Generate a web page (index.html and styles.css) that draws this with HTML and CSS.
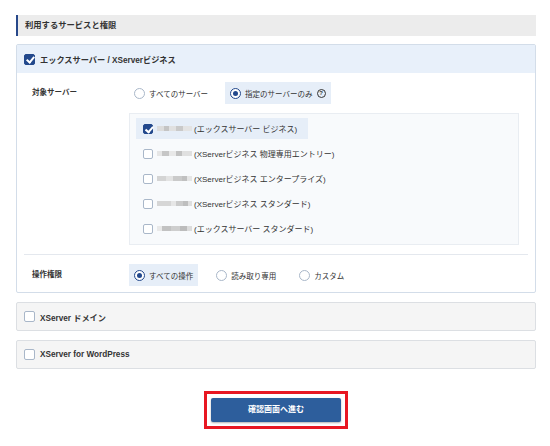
FILE: index.html
```html
<!doctype html>
<html lang="ja">
<head>
	<meta charset="UTF-8">
	<title>利用するサービスと権限</title>
	<link rel="stylesheet" href="styles.css">
</head>
<body>
	<div class="wrap">
		<h2 class="sec_title">利用するサービスと権限</h2>

		<!-- エックスサーバー / XServerビジネス -->
		<div class="panel panel_on">
			<div class="panel_head">
				<span class="chk chk_on"></span>
				<span class="panel_name">エックスサーバー / XServerビジネス</span>
			</div>
			<div class="panel_body">
				<div class="row">
					<div class="row_label">対象サーバー</div>
					<div class="row_main">
						<div class="opts">
							<label class="opt"><span class="radio"></span>すべてのサーバー</label>
							<label class="opt opt_on"><span class="radio radio_on"></span>指定のサーバーのみ<span class="help">?</span></label>
						</div>
						<ul class="server_list">
							<li class="server server_on"><span class="chk chk_sm chk_on"></span><span class="mask m1"></span>(エックスサーバー ビジネス)</li>
							<li class="server"><span class="chk chk_sm"></span><span class="mask m2"></span>(XServerビジネス 物理専用エントリー)</li>
							<li class="server"><span class="chk chk_sm"></span><span class="mask m3"></span>(XServerビジネス エンタープライズ)</li>
							<li class="server"><span class="chk chk_sm"></span><span class="mask m4"></span>(XServerビジネス スタンダード)</li>
							<li class="server"><span class="chk chk_sm"></span><span class="mask m5"></span>(エックスサーバー スタンダード)</li>
						</ul>
					</div>
				</div>
				<div class="row row_line">
					<div class="row_label">操作権限</div>
					<div class="row_main">
						<div class="opts opts_wide">
							<label class="opt opt_on"><span class="radio radio_on"></span>すべての操作</label>
							<label class="opt"><span class="radio"></span>読み取り専用</label>
							<label class="opt"><span class="radio"></span>カスタム</label>
						</div>
					</div>
				</div>
			</div>
		</div>

		<div class="panel panel_off">
			<div class="panel_head">
				<span class="chk"></span>
				<span class="panel_name">XServer ドメイン</span>
			</div>
		</div>

		<div class="panel panel_off">
			<div class="panel_head">
				<span class="chk"></span>
				<span class="panel_name">XServer for WordPress</span>
			</div>
		</div>

		<div class="btn_area">
			<div class="mark">
				<a class="btn" href="#">確認画面へ進む</a>
			</div>
		</div>
	</div>
</body>
</html>
```

FILE: styles.css
```css
*{
	margin: 0;
	padding: 0;
	list-style-type: none;
	box-sizing: border-box;
}
body{
	background: #fff;
	color: #333;
	font-family: "Liberation Sans", "Noto Sans CJK JP", sans-serif;
	font-size: 8px;
}
.wrap{
	width: 520px;
	margin-left: 16px;
	padding-top: 15px;
}
.sec_title{
	height: 21px;
	line-height: 21px;
	padding-left: 7px;
	background: #ececec;
	border-left: 2px solid #27488a;
	font-size: 8.3px;
	font-weight: bold;
}

/* パネル */
.panel{
	margin-top: 8px;
	border: 1px solid #d3dde9;
	border-radius: 2px;
	background: #fff;
}
.panel_off{
	margin-top: 9px;
	background: #f5f5f5;
	border-color: #dcdfe3;
}
.panel_head{
	height: 28px;
	display: flex;
	align-items: center;
	gap: 5px;
	padding-left: 7px;
}
.panel_off .panel_head{
	height: 27px;
}
.panel_on .panel_head{
	background: #e8f0fa;
}
.panel_name{
	font-weight: bold;
	font-size: 8.2px;
}
.panel_body{
	padding: 9px 7px 6px 7px;
}

/* チェックボックス */
.chk{
	display: inline-block;
	width: 11px;
	height: 11px;
	border: 1px solid #a9b7c9;
	border-radius: 2px;
	background: #fff;
	flex-shrink: 0;
	position: relative;
}
.chk_sm{
	width: 10px;
	height: 10px;
}
.chk_on{
	background: #22488c;
	border-color: #22488c;
}
.chk_on:after{
	content: "";
	position: absolute;
	left: 3px;
	top: 0px;
	width: 3px;
	height: 6px;
	border: solid #fff;
	border-width: 0 2px 2px 0;
	transform: rotate(40deg);
}
.chk_sm.chk_on:after{
	left: 2.5px;
	top: 0;
	height: 5.5px;
}

/* 行 */
.row{
	display: flex;
}
.row_line{
	margin-top: 9px;
	padding-top: 9px;
	border-top: 1px solid #e4e8ee;
}
.row_label{
	width: 105px;
	padding-left: 8px;
	height: 22px;
	line-height: 22px;
	font-size: 7.5px;
	font-weight: bold;
	flex-shrink: 0;
}
.row_main{
	flex: 1;
	padding-right: 9px;
}
.opts{
	display: flex;
	gap: 12px;
	font-size: 7.5px;
}
.opts_wide{
	gap: 13px;
}
.opt{
	height: 22px;
	display: flex;
	align-items: center;
	gap: 3px;
	padding: 0 5px;
}
.opt_on{
	background: #e6eef8;
}
.radio{
	display: inline-block;
	width: 11px;
	height: 11px;
	border: 1px solid #a9b7c9;
	border-radius: 50%;
	background: #fff;
	margin-right: 1px;
	position: relative;
}
.radio_on{
	border-color: #22488c;
}
.radio_on:after{
	content: "";
	position: absolute;
	left: 2px;
	top: 2px;
	width: 5px;
	height: 5px;
	border-radius: 50%;
	background: #22488c;
}
.help{
	display: inline-flex;
	align-items: center;
	justify-content: center;
	width: 9px;
	height: 9px;
	border: 1px solid #333;
	border-radius: 50%;
	font-size: 6px;
	font-weight: bold;
	margin-left: 1px;
}

/* サーバー一覧 */
.server_list{
	margin-top: 9px;
	padding: 4px 6px 5px;
	background: #f8fafc;
	border: 1px solid #e9edf2;
	display: flex;
	flex-direction: column;
	align-items: flex-start;
	gap: 4px;
}
.server{
	height: 21px;
	display: flex;
	align-items: center;
	padding: 0 11px 0 7px;
}
.server_on{
	background: #e6eef8;
}
.server .chk{
	margin-right: 4px;
}
.mask{
	display: inline-block;
	width: 35px;
	height: 5px;
	margin-right: 2px;
	background: linear-gradient(90deg, #dcdcdc 0 20%, #c4c4c4 20% 35%, #e0e0e0 35% 55%, #c9c9c9 55% 75%, #e3e3e3 75% 100%);
}
.m2{
	background: linear-gradient(90deg, #e6e6e6 0 15%, #c6c6c6 15% 35%, #e8e8e8 35% 55%, #c2c2c2 55% 72%, #e0e0e0 72% 100%);
}
.m3{
	background: linear-gradient(90deg, #d4d4d4 0 25%, #e3e3e3 25% 45%, #cacaca 45% 70%, #c0c0c0 70% 85%, #e5e5e5 85% 100%);
}
.m4{
	background: linear-gradient(90deg, #d6d6d6 0 40%, #e6e6e6 40% 55%, #cbcbcb 55% 75%, #bebebe 75% 88%, #dfdfdf 88% 100%);
}
.m5{
	background: linear-gradient(90deg, #e9e9e9 0 15%, #c2c2c2 15% 40%, #cecece 40% 65%, #bcbcbc 65% 85%, #dcdcdc 85% 100%);
}

/* ボタン */
.btn_area{
	display: flex;
	justify-content: center;
	padding-top: 22px;
}
.mark{
	border: 3px solid #e81722;
	padding: 4px;
}
.btn{
	display: block;
	width: 130px;
	height: 24px;
	line-height: 24px;
	text-align: center;
	background: #2d5e9c;
	color: #fff;
	font-weight: bold;
	text-decoration: none;
	border-radius: 2px;
	box-shadow: 0 1px 2px rgba(0,0,0,.3);
}
```
